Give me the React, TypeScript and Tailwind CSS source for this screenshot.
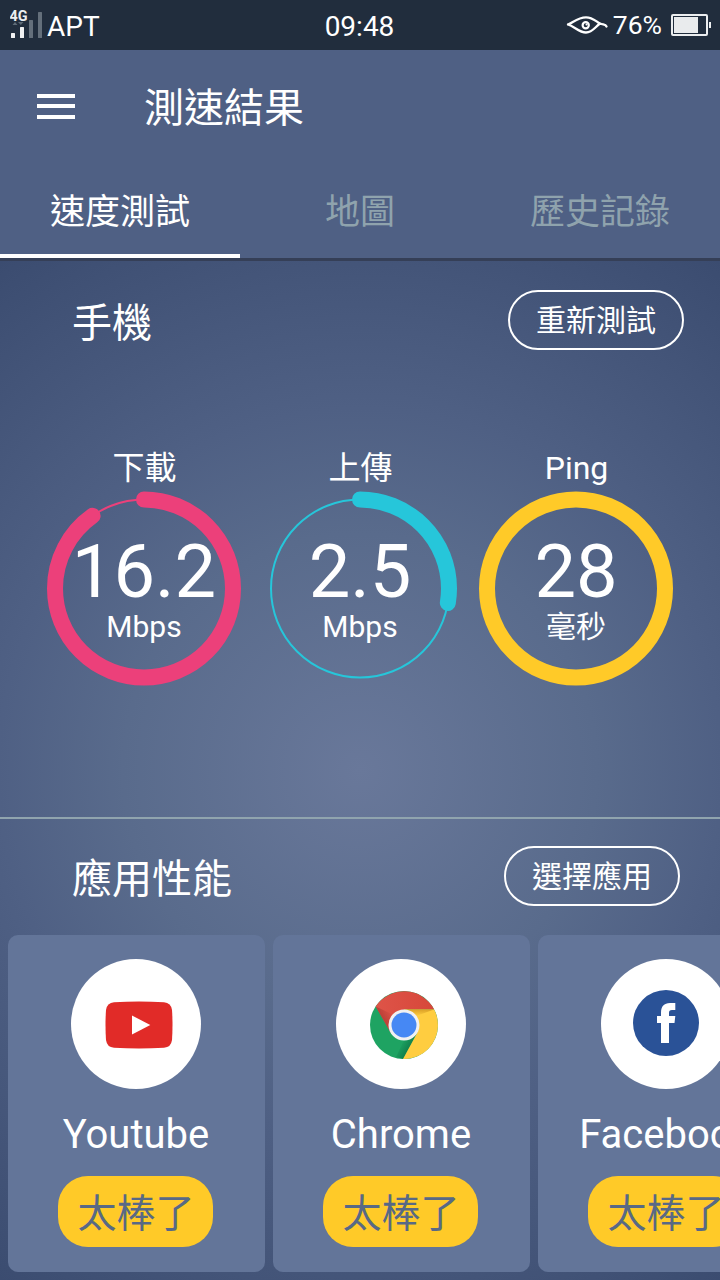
import clsx from "clsx";
import { ReactNode } from "react";

const SignalIcon = () => (
  <svg width="34" height="32" viewBox="0 0 34 32">
    <text
      x="-0.5"
      y="11.5"
      fill="#eceef0"
      fontSize="14"
      fontWeight="700"
      fontFamily="Roboto, sans-serif"
      textLength="18"
      lengthAdjust="spacingAndGlyphs"
    >
      4G
    </text>
    <path d="M2.5 16l2.500-3 2.500 3zM8 13h5.500l-2.700 3z" fill="#5f6b77" />
    <rect x="1" y="24" width="4" height="5" rx="0.5" fill="#f0f1f2" />
    <rect x="10" y="18" width="4" height="11" rx="0.5" fill="#f0f1f2" />
    <rect x="19" y="11" width="4" height="18" rx="0.5" fill="#646f7b" />
    <rect x="28" y="3" width="4" height="26" rx="0.5" fill="#646f7b" />
  </svg>
);

const EyeIcon = () => (
  <svg width="42" height="20" viewBox="0 0 42 20" fill="none" stroke="#fff">
    <path
      d="M2 9.5C7 7.5 12 2.3 20 2.3C27 2.3 30 6.5 34 8.5C37 10 39.5 9 40.5 11.5M2 9.5C8 11 13 17.5 20 17.5C26.5 17.5 29 12 34 8.5"
      strokeWidth="2.3"
      strokeLinecap="round"
    />
    <circle cx="19.7" cy="10.2" r="3.1" strokeWidth="2.2" />
    <circle cx="20.5" cy="9.5" r="1" fill="#fff" stroke="none" />
  </svg>
);

const BatteryIcon = () => (
  <svg width="40" height="22" viewBox="0 0 40 22">
    <rect
      x="1"
      y="1"
      width="35"
      height="20"
      rx="1"
      fill="none"
      stroke="#eceef0"
      strokeWidth="2"
    />
    <rect x="3" y="3" width="24" height="16" fill="#e9ebed" />
    <rect x="38" y="8" width="2" height="6" fill="#eceef0" />
  </svg>
);

const YoutubeIcon = () => (
  <svg
    className="ml-[6px] mt-[2px]"
    width="68"
    height="48"
    viewBox="0 0 68 48"
  >
    <path
      d="M9 1.2Q34 -0.3 59 1.2Q66 1.7 67 9Q68 24 67 39Q66 46.3 59 46.8Q34 48.3 9 46.8Q2 46.3 1 39Q0 24 1 9Q2 1.7 9 1.2Z"
      fill="#e12b28"
    />
    <path d="M27 14.5v19l18.3-9.5z" fill="#fff" />
  </svg>
);

const ChromeIcon = () => (
  <svg
    className="ml-[6px] mt-[2px]"
    width="70"
    height="70"
    viewBox="-35 -35 70 70"
  >
    <defs>
      <linearGradient id="red" x1="0" y1="0" x2="1" y2="0">
        <stop offset="0" stopColor="#de5448" />
        <stop offset="1" stopColor="#d7473a" />
      </linearGradient>
      <linearGradient
        id="redShade"
        x1="-23"
        y1="-4"
        x2="-11"
        y2="-11"
        gradientUnits="userSpaceOnUse"
      >
        <stop offset="0" stopColor="#a93630" stopOpacity="0.8" />
        <stop offset="1" stopColor="#a93630" stopOpacity="0" />
      </linearGradient>
      <linearGradient
        id="yellowShade"
        x1="0"
        y1="-15"
        x2="0"
        y2="-9"
        gradientUnits="userSpaceOnUse"
      >
        <stop offset="0" stopColor="#d69a22" stopOpacity="0.8" />
        <stop offset="1" stopColor="#d69a22" stopOpacity="0" />
      </linearGradient>
      <linearGradient
        id="greenShade"
        x1="6"
        y1="25"
        x2="-4"
        y2="19"
        gradientUnits="userSpaceOnUse"
      >
        <stop offset="0" stopColor="#0b7042" stopOpacity="0.8" />
        <stop offset="1" stopColor="#0b7042" stopOpacity="0" />
      </linearGradient>
    </defs>
    <circle r="34" fill="#1ea362" />
    <path d="M13.3 7.7L-1 34L-8 32L0 15Z" fill="url(#greenShade)" />
    <path
      d="M-28.3-18.5A34 34 0 0 1 30.2-15.5H0L-13.3 7.7Z"
      fill="url(#red)"
    />
    <path d="M-28.3-18.5L-13.3 7.7L-10-10Z" fill="url(#redShade)" />
    <path
      d="M30.2-15.5A34 34 0 0 1-1 34L13.3 7.7L0-15.5Z"
      fill="#ffcd40"
    />
    <path d="M0-15.5H30.2L12-9Z" fill="url(#yellowShade)" />
    <circle r="15.5" fill="#f1f1f1" />
    <circle r="12.5" fill="#4688f4" />
  </svg>
);

const FacebookIcon = () => (
  <svg className="-mt-[2px]" width="66" height="66" viewBox="0 0 66 66">
    <circle cx="33" cy="33" r="33" fill="#2a5297" />
    <path
      d="M28 53V33h-4v-7h4v-3.5C28 16.5 31 13 37 13h5.3v7H39c-2.3 0-3 1-3 3v3h6.3l-.8 7H36v20z"
      fill="#fff"
    />
  </svg>
);

const tabs = ["速度測試", "地圖", "歷史記錄"];

type GaugeProps = {
  label: string;
  value: string;
  unit: string;
  color: string;
  ratio: number;
};

const gauges: GaugeProps[] = [
  { label: "下載", value: "16.2", unit: "Mbps", color: "#ec407a", ratio: 0.902 },
  { label: "上傳", value: "2.5", unit: "Mbps", color: "#26c6da", ratio: 0.276 },
  { label: "Ping", value: "28", unit: "毫秒", color: "#ffca28", ratio: 1 },
];

const apps = [
  { name: "Youtube", icon: <YoutubeIcon /> },
  { name: "Chrome", icon: <ChromeIcon /> },
  { name: "Facebook", icon: <FacebookIcon /> },
];

const Gauge = ({ label, value, unit, color, ratio }: GaugeProps) => (
  <div className="flex flex-col items-center">
    <span className="text-[32px] leading-[40px] h-[42px] pl-[1px]">
      {label}
    </span>
    <div className="grid place-items-center">
      <svg
        className="col-start-1 row-start-1"
        width="196"
        height="197"
        viewBox="-98 -98.5 196 197"
        fill="none"
        stroke={color}
      >
        <circle r="89" strokeWidth="2" />
        <circle
          r="89"
          strokeWidth="16"
          strokeLinecap="round"
          pathLength="1"
          strokeDasharray={`${ratio} 1`}
          transform="rotate(-90)"
        />
      </svg>
      <div className="col-start-1 row-start-1 flex flex-col items-center">
        <span className="text-[74px] leading-[78px] -mb-[2px]">{value}</span>
        <span className="text-[30px] leading-[36px]">{unit}</span>
      </div>
    </div>
  </div>
);

const OutlineButton = ({ children }: { children: ReactNode }) => (
  <button className="w-44 h-[60px] pt-[2px] rounded-full border-2 border-white text-[30px] leading-none">
    {children}
  </button>
);

const AppCard = ({ name, icon }: { name: string; icon: ReactNode }) => (
  <div className="w-[257px] h-[337px] shrink-0 rounded-[10px] bg-[#637599] flex flex-col items-center pt-6 pr-[2px]">
    <div className="w-[130px] h-[130px] rounded-full bg-white flex items-center justify-center">
      {icon}
    </div>
    <span className="mt-[22px] pl-[1px] text-[40px] leading-[48px]">
      {name}
    </span>
    <div className="mt-[17px] pt-[5px] pl-[1px] w-[155px] h-[71px] rounded-[30px] bg-[#ffca28] text-[#586985] flex items-center justify-center text-[39px] leading-none">
      太棒了
    </div>
  </div>
);

const App = () => {
  return (
    <div
      lang="zh-Hant"
      className="w-[720px] h-[1280px] overflow-hidden flex flex-col text-white font-[Roboto,'Noto_Sans_CJK_TC',sans-serif]"
    >
      <div className="h-[50px] shrink-0 bg-[#212d3d] grid grid-cols-3 items-center pl-[10px] pr-[9px] text-[28px] leading-none">
        <div className="flex items-center gap-[3px]">
          <SignalIcon />
          <span className="pt-[3px]">APT</span>
        </div>
        <span className="text-center pt-[3px] pr-[2px]">09:48</span>
        <div className="flex items-center justify-end">
          <EyeIcon />
          <span className="text-[26.5px] ml-[5px] mr-[9px]">76%</span>
          <BatteryIcon />
        </div>
      </div>

      <header className="h-[211px] shrink-0 bg-[#4f6084] border-b-[3px] border-[#353f57] flex flex-col">
        <div className="h-[112px] flex items-center">
          <div className="ml-[37px] w-[38px] flex flex-col gap-[6.5px]">
            <div className="h-1 bg-white"></div>
            <div className="h-1 bg-white"></div>
            <div className="h-1 bg-white"></div>
          </div>
          <h1 className="ml-[69px] pt-[5px] text-[40px] leading-none">
            測速結果
          </h1>
        </div>
        <nav className="flex-1 grid grid-cols-3 text-[35px] leading-none">
          {tabs.map((tab, index) => (
            <div
              key={tab}
              className={clsx(
                "flex items-center justify-center pt-[9px] border-b-4",
                index === 0
                  ? "border-white text-white"
                  : "border-transparent text-[#8fa3ad]"
              )}
            >
              {tab}
            </div>
          ))}
        </nav>
      </header>

      <main className="flex-1 flex flex-col bg-[radial-gradient(circle_at_50%_50%,#69789a_0%,#596b8c_38%,#4f6084_58%,#3b4c70_100%)]">
        <section className="h-[558px] border-b-2 border-[#90a4ae] pt-[29px]">
          <div className="flex items-center justify-between pl-[72px] pr-9">
            <h2 className="pt-[7px] text-[40px] leading-none">手機</h2>
            <OutlineButton>重新測試</OutlineButton>
          </div>
          <div className="mt-[98px] px-9 grid grid-cols-3">
            {gauges.map((gauge) => (
              <Gauge key={gauge.label} {...gauge} />
            ))}
          </div>
        </section>
        <section className="pt-[27px]">
          <div className="flex items-center justify-between pl-[72px] pr-10">
            <h2 className="pt-[7px] text-[40px] leading-none">應用性能</h2>
            <OutlineButton>選擇應用</OutlineButton>
          </div>
          <div className="mt-[29px] pl-2 flex gap-2">
            {apps.map((app) => (
              <AppCard key={app.name} {...app} />
            ))}
          </div>
        </section>
      </main>
    </div>
  );
};

export default App;
